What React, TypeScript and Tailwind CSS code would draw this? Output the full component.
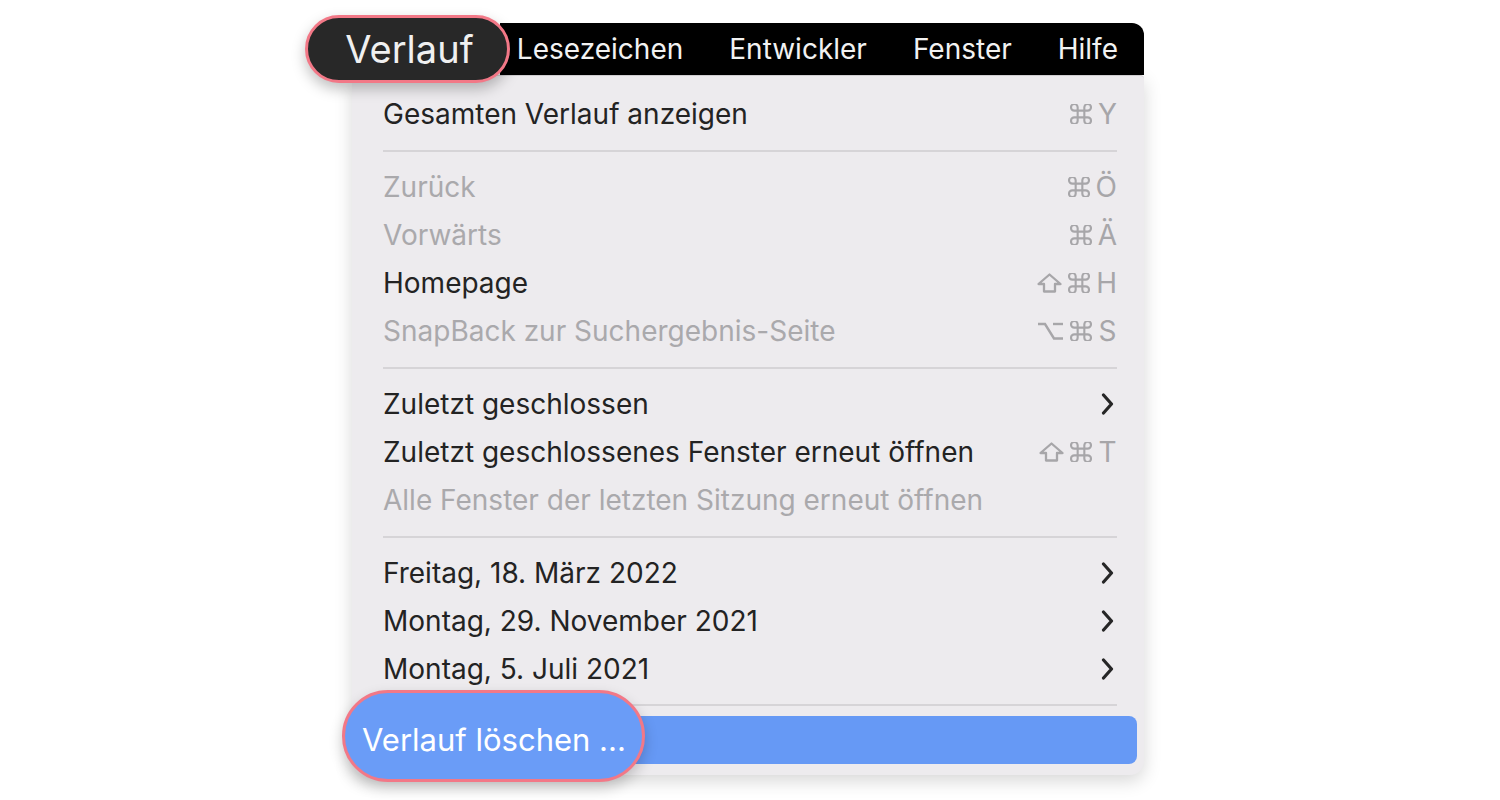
import React from 'react';

type Mod = 'cmd' | 'shift' | 'opt';
type Item =
  | { kind: 'sep'; h: number }
  | { kind: 'item'; text: string; disabled?: boolean; mods?: Mod[]; key?: string; sub?: boolean };

const items: Item[] = [
  { kind: 'item', text: 'Gesamten Verlauf anzeigen', mods: ['cmd'], key: 'Y' },
  { kind: 'sep', h: 25 },
  { kind: 'item', text: 'Zurück', disabled: true, mods: ['cmd'], key: 'Ö' },
  { kind: 'item', text: 'Vorwärts', disabled: true, mods: ['cmd'], key: 'Ä' },
  { kind: 'item', text: 'Homepage', mods: ['shift', 'cmd'], key: 'H' },
  { kind: 'item', text: 'SnapBack zur Suchergebnis-Seite', disabled: true, mods: ['opt', 'cmd'], key: 'S' },
  { kind: 'sep', h: 25 },
  { kind: 'item', text: 'Zuletzt geschlossen', sub: true },
  { kind: 'item', text: 'Zuletzt geschlossenes Fenster erneut öffnen', mods: ['shift', 'cmd'], key: 'T' },
  { kind: 'item', text: 'Alle Fenster der letzten Sitzung erneut öffnen', disabled: true },
  { kind: 'sep', h: 25 },
  { kind: 'item', text: 'Freitag, 18. März 2022', sub: true },
  { kind: 'item', text: 'Montag, 29. November 2021', sub: true },
  { kind: 'item', text: 'Montag, 5. Juli 2021', sub: true },
  { kind: 'sep', h: 23 },
];

function ModIcon({ m }: { m: Mod }) {
  if (m === 'cmd')
    return (
      <svg width="22" height="20" viewBox="3 3 18 18" fill="none" stroke="currentColor" strokeWidth="1.9" strokeLinecap="round" strokeLinejoin="round">
        <path d="M15 6v12a3 3 0 1 0 3-3H6a3 3 0 1 0 3 3V6a3 3 0 1 0-3 3h12a3 3 0 1 0-3-3" />
      </svg>
    );
  if (m === 'shift')
    return (
      <svg width="25" height="20" viewBox="0 0 25 20" fill="none" stroke="currentColor" strokeWidth="2.3" strokeLinejoin="round">
        <path d="M12.5 1.5 L23.5 11 H18 V18.5 H7 V11 H1.5 Z" />
      </svg>
    );
  return (
    <svg width="27" height="18" viewBox="0 0 27 18" fill="none" stroke="currentColor" strokeWidth="2.4" strokeLinecap="butt">
      <path d="M1 2 H8 L17 16.5 H26" />
      <path d="M16 2 H26" />
    </svg>
  );
}

function Shortcut({ mods, k }: { mods: Mod[]; k: string }) {
  return (
    <div className="flex items-center gap-[6px] text-[#a7a6a9]">
      {mods.map((m, i) => (
        <ModIcon key={i} m={m} />
      ))}
      <span className="min-w-[19px] text-center leading-none">{k}</span>
    </div>
  );
}

function Chevron() {
  return (
    <svg width="13" height="22" viewBox="0 0 13 22" fill="none" stroke="#262626" strokeWidth="3.2" strokeLinecap="round" strokeLinejoin="round" className="mr-[3px]">
      <path d="M2.5 2 L10.5 11 L2.5 20" />
    </svg>
  );
}

const menuBar = ['Lesezeichen', 'Entwickler', 'Fenster', 'Hilfe'];

export default function App() {
  return (
    <div
      className="relative w-full h-[800px] bg-white overflow-hidden"
      style={{ fontFamily: 'Inter, "Noto Sans", "Liberation Sans", sans-serif' }}
    >
      <div className="flex flex-col ml-[352px] pt-[23px] w-[792px]">
        <div className="ml-[148px] h-[52px] bg-black rounded-tr-[12px] flex items-center justify-end gap-[46px] pr-[26px] text-[28px] text-[#f2f2f2]">
          {menuBar.map((m) => (
            <span key={m}>{m}</span>
          ))}
        </div>
        <div className="bg-[#edebee] border-t border-[#cfcdd0] rounded-b-[14px] rounded-tr-[4px] pt-[14px] pb-[11px] shadow-[0_6px_18px_rgba(0,0,0,0.16)] text-[28px]">
          {items.map((it, i) =>
            it.kind === 'sep' ? (
              <div key={i} className="flex items-center pl-[31px] pr-[27px]" style={{ height: it.h }}>
                <div className="h-[2px] w-full bg-[#d6d4d7]" />
              </div>
            ) : (
              <div
                key={i}
                className={`h-[48px] flex items-center justify-between pl-[31px] pr-[27px] ${
                  it.disabled ? 'text-[#aaa9ac]' : 'text-[#232323]'
                }`}
              >
                <span>{it.text}</span>
                {it.mods && it.key && <Shortcut mods={it.mods} k={it.key} />}
                {it.sub && <Chevron />}
              </div>
            )
          )}
          <div className="mx-[7px] h-[48px] rounded-[8px] bg-[#6699f5]" />
        </div>
      </div>

      <div className="absolute left-[305px] top-[15px] w-[205px] h-[68px] rounded-full bg-[#282828] border-[3px] border-[#f27887] shadow-[0_6px_14px_rgba(0,0,0,0.25)] flex items-center justify-center pl-[4px] text-[38px] text-[#f0f0f0]">
        Verlauf
      </div>
      <div className="absolute left-[342px] top-[690px] w-[303px] h-[92px] rounded-full bg-[#6a9cf7] border-[3px] border-[#f27887] shadow-[0_6px_14px_rgba(0,0,0,0.2)] flex items-center pl-[17px] pt-[8px] text-[31px] text-white">
        Verlauf löschen ...
      </div>
    </div>
  );
}
